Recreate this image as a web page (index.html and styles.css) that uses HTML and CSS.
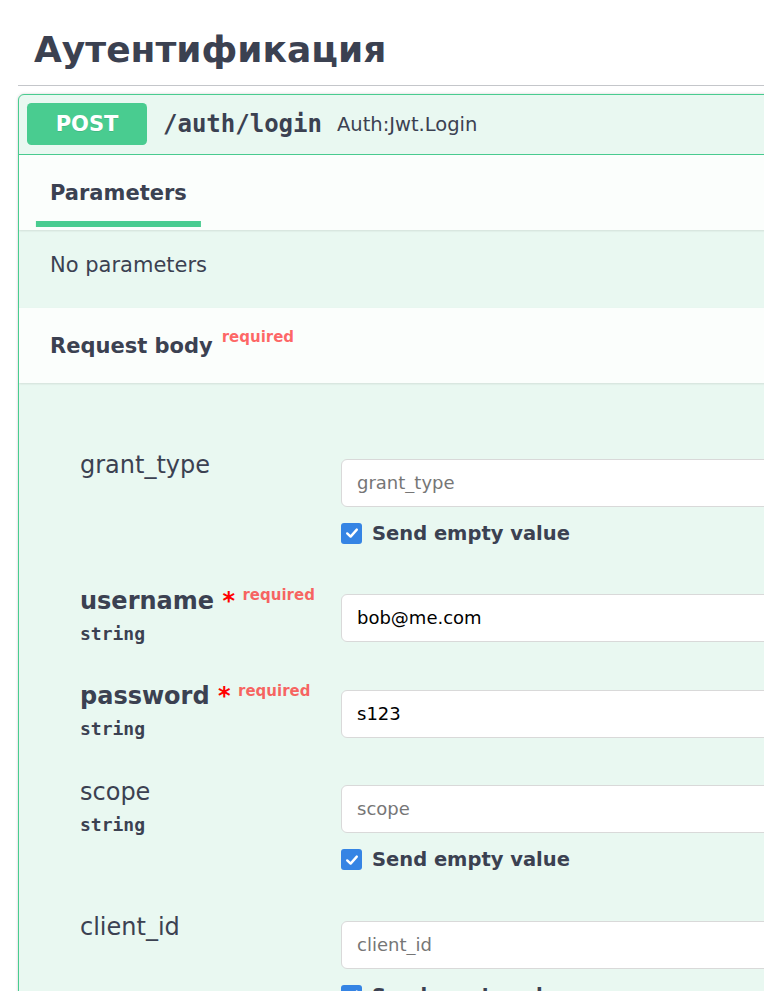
FILE: index.html
```html
<!DOCTYPE html>
<html lang="ru">
<head>
<meta charset="utf-8">
<title>Аутентификация</title>
<link rel="stylesheet" href="styles.css">
</head>
<body>
<div class="wrap">
  <h3 class="tag">Аутентификация</h3>
  <div class="opblock">
    <div class="summary">
      <span class="method">POST</span>
      <span class="path">/auth/login</span>
      <span class="summary-desc">Auth:Jwt.Login</span>
    </div>
    <div class="section-header">
      <h4 class="tab"><span class="tab-label">Parameters</span></h4>
    </div>
    <div class="desc-wrapper">
      <p class="no-params">No parameters</p>
    </div>
    <div class="section-header">
      <h4 class="sec-title">Request body</h4>
      <span class="sec-required">required</span>
    </div>
    <div class="body">
      <div class="param-row">
        <div class="col-name">
          <div class="p-name">grant_type</div>
        </div>
        <div class="col-desc">
          <input class="p-input" type="text" placeholder="grant_type">
          <label class="empty-toggle"><span class="check"><svg viewBox="0 0 16 16" width="16" height="16"><path d="M3.2 8.4 L6.6 11.6 L12.8 4.6" fill="none" stroke="#fff" stroke-width="2.4" stroke-linecap="round" stroke-linejoin="round"/></svg></span>Send empty value</label>
        </div>
      </div>
      <div class="param-row">
        <div class="col-name">
          <div class="p-name required">username<span class="star">&nbsp;*</span><span class="req-tag">required</span></div>
          <div class="p-type">string</div>
        </div>
        <div class="col-desc">
          <input class="p-input" type="text" value="bob@me.com">
        </div>
      </div>
      <div class="param-row">
        <div class="col-name">
          <div class="p-name required">password<span class="star">&nbsp;*</span><span class="req-tag">required</span></div>
          <div class="p-type">string</div>
        </div>
        <div class="col-desc">
          <input class="p-input" type="text" value="s123">
        </div>
      </div>
      <div class="param-row">
        <div class="col-name">
          <div class="p-name">scope</div>
          <div class="p-type">string</div>
        </div>
        <div class="col-desc">
          <input class="p-input" type="text" placeholder="scope">
          <label class="empty-toggle"><span class="check"><svg viewBox="0 0 16 16" width="16" height="16"><path d="M3.2 8.4 L6.6 11.6 L12.8 4.6" fill="none" stroke="#fff" stroke-width="2.4" stroke-linecap="round" stroke-linejoin="round"/></svg></span>Send empty value</label>
        </div>
      </div>
      <div class="param-row">
        <div class="col-name">
          <div class="p-name">client_id</div>
        </div>
        <div class="col-desc">
          <input class="p-input" type="text" placeholder="client_id">
          <label class="empty-toggle"><span class="check"><svg viewBox="0 0 16 16" width="16" height="16"><path d="M3.2 8.4 L6.6 11.6 L12.8 4.6" fill="none" stroke="#fff" stroke-width="2.4" stroke-linecap="round" stroke-linejoin="round"/></svg></span>Send empty value</label>
        </div>
      </div>
    </div>
  </div>
</div>
</body>
</html>
```
FILE: styles.css
```css
html, body {
  margin: 0;
  padding: 0;
  overflow: hidden;
  background: #fff;
}

body {
  font-family: "DejaVu Sans", sans-serif;
  color: #3b4151;
}

.wrap {
  width: 1300px;
  margin: 14px 0 0 18px;
}

.tag {
  margin: 0 0 8px;
  padding: 15px 30px 15px 16px;
  font-size: 36px;
  font-weight: bold;
  line-height: normal;
  border-bottom: 1px solid rgba(59, 65, 81, 0.3);
  color: #3b4151;
}

.opblock {
  border: 1px solid #49cc90;
  border-radius: 6px;
  background: #e9f8f1;
  box-shadow: 0 0 3px rgba(0, 0, 0, 0.19);
  overflow: hidden;
}

.summary {
  display: flex;
  align-items: center;
  padding: 8px 8px 9px;
  border-bottom: 1px solid #49cc90;
}

.method {
  width: 120px;
  padding: 9px 0;
  border-radius: 4.5px;
  background: #49cc90;
  color: #fff;
  font-size: 21px;
  font-weight: bold;
  text-align: center;
  text-shadow: 0 1px 0 rgba(0, 0, 0, 0.1);
  line-height: 24px;
}

.path {
  padding: 0 15px 0 16px;
  font-family: "DejaVu Sans Mono", monospace;
  font-size: 24px;
  font-weight: bold;
  color: #3b4151;
}

.summary-desc {
  font-size: 19.5px;
  color: #3b4151;
}

.section-header {
  display: flex;
  align-items: center;
  min-height: 75px;
  box-sizing: border-box;
  padding: 12px 31px;
  background: rgba(255, 255, 255, 0.8);
  box-shadow: 0 1px 2px rgba(0, 0, 0, 0.1);
  position: relative;
}

.tab {
  margin: 0;
  font-size: 21px;
  font-weight: bold;
}

.tab-label {
  position: relative;
}

.tab-label::after {
  content: "";
  position: absolute;
  left: 50%;
  bottom: -22.5px;
  width: 120%;
  height: 6px;
  transform: translateX(-50%);
  background: #49cc90;
}

.desc-wrapper {
  padding: 23px 31px 31px;
}

.no-params {
  margin: 0;
  font-size: 21px;
}

.sec-title {
  margin: 0;
  font-size: 21px;
  font-weight: bold;
}

.sec-required {
  position: relative;
  top: -9px;
  margin-left: 9px;
  font-size: 15px;
  font-weight: bold;
  color: rgba(255, 0, 0, 0.6);
}

.body {
  padding: 53px 30px 0 61px;
}

.param-row {
  display: grid;
  grid-template-columns: 261px 1fr;
  padding: 15px 0;
}

.p-name {
  font-size: 24px;
  line-height: normal;
  font-weight: normal;
}

.p-name.required {
  font-weight: bold;
}

.star {
  color: red;
}

.req-tag {
  position: relative;
  top: -9px;
  padding: 7.5px;
  font-size: 15px;
  font-weight: bold;
  color: rgba(255, 0, 0, 0.6);
}

.p-type {
  padding: 8px 0;
  font-family: "DejaVu Sans Mono", monospace;
  font-size: 18px;
  font-weight: bold;
  line-height: 21.5px;
}

.col-desc {
  display: flex;
  flex-direction: column;
  align-items: flex-start;
}

.p-input {
  width: 510px;
  box-sizing: border-box;
  margin: 7.5px 0;
  padding: 12px 15px;
  border: 1px solid #d9d9d9;
  border-radius: 6px;
  background: #fff;
  font-family: "DejaVu Sans", sans-serif;
  font-size: 18px;
  line-height: 22px;
  color: #000;
  outline: none;
}

.p-input::placeholder {
  color: #767676;
}

.empty-toggle {
  display: flex;
  align-items: center;
  padding: 7.5px 0 12px;
  font-size: 19.5px;
  font-weight: bold;
  line-height: 23px;
}

.check {
  display: flex;
  align-items: center;
  justify-content: center;
  width: 21px;
  height: 21px;
  margin-right: 10px;
  border-radius: 3px;
  background: #3584e4;
}
```
